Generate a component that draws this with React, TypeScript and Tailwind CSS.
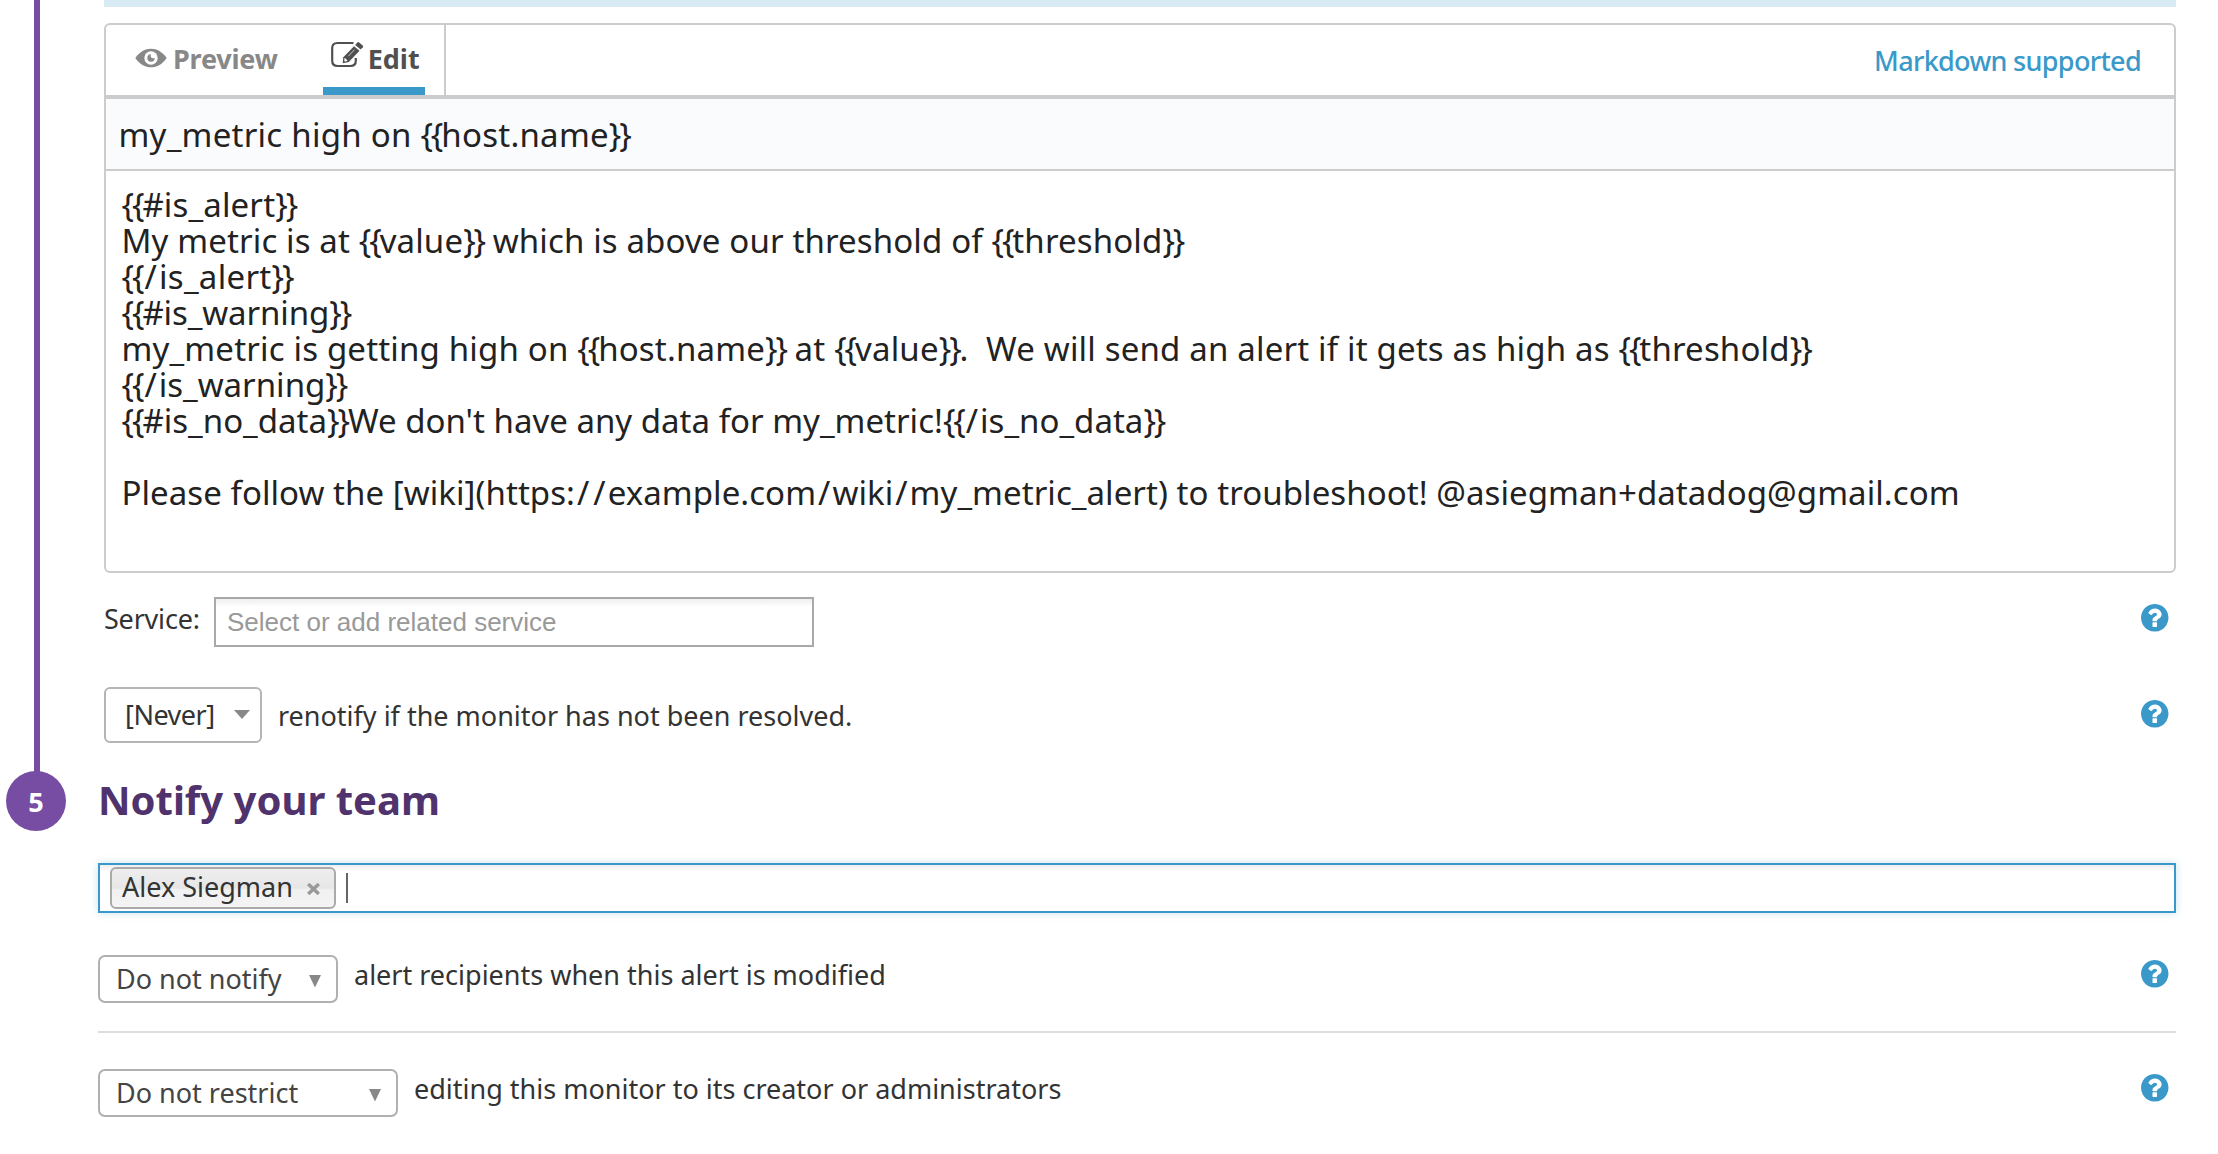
import type { ReactNode } from "react";

function EyeIcon() {
  return (
    <svg viewBox="0 0 32 20" className="h-5 w-8 shrink-0" aria-hidden="true">
      <path d="M0.3 10C4.6 3.8 10 0.7 16 0.7S27.400 3.800 31.700 10C27.400 16.200 22 19.300 16 19.300S4.600 16.200 0.300 10Z" fill="currentColor" />
      <circle cx="16" cy="10" r="6.700" fill="#fff" />
      <path d="M16 6.300A3.700 3.700 0 1 0 19.700 10Q17 10.700 16 9.300Q15.300 8 16 6.300Z" fill="currentColor" />
    </svg>
  );
}

function EditIcon() {
  return (
    <svg viewBox="0 0 33 27" className="h-[27px] w-[33px] shrink-0" fill="none" aria-hidden="true">
      <path d="M22.500 2H6.500Q1.200 2 1.200 7.200V19.800Q1.200 25 6.500 25H19.500Q24.800 25 24.800 19.800V17" stroke="currentColor" strokeWidth="2.200" />
      <path d="M23 5.200L28.500 9.700L17.800 21L11.700 22.200L12.300 16.200Z" fill="currentColor" />
      <path d="M24.200 4L26.300 1.500Q27.200 0.600 28.200 1.400L31.700 4.400Q32.600 5.200 31.800 6.200L29.600 8.500Z" fill="currentColor" />
      <path d="M13.900 17L16.500 19.400L15.700 20.200L13.900 20.500L13.300 19.900L13.500 17.600Z" fill="#fff" />
      <path d="M17.400 15.200L23.600 8.600" stroke="#fff" strokeWidth="0.700" />
    </svg>
  );
}

function HelpIcon({ className }: { className: string }) {
  return (
    <svg viewBox="128 128 1536 1536" className={`ml-auto mr-[7.500px] size-[27.500px] shrink-0 ${className}`} fill="#3a99c9" aria-hidden="true">
      <path d="M1024 1376v-192q0-14-9-23t-23-9h-192q-14 0-23 9t-9 23v192q0 14 9 23t23 9h192q14 0 23-9t9-23zm256-672q0-88-55.500-163t-138.500-116-170-41q-243 0-371 213-15 24 8 42l132 100q7 6 19 6 16 0 25-12 53-68 86-92 34-24 86-24 48 0 85.500 26t37.500 59q0 38-20 61t-68 45q-63 28-115.500 86.500t-52.500 125.500v36q0 14 9 23t23 9h192q14 0 23-9t9-23q0-19 21.500-49.500t54.500-49.500q32-18 49-28.500t46-35 44.500-48 28-60.500 12.500-81zm384 192q0 209-103 385.500t-279.500 279.500-385.500 103-385.500-103-279.500-279.500-103-385.500 103-385.500 279.500-279.500 385.500-103 385.500 103 279.500 279.500 103 385.500z" />
    </svg>
  );
}

function Triangle({ className }: { className: string }) {
  return (
    <svg viewBox="0 0 12 12" preserveAspectRatio="none" className={`shrink-0 ${className}`} aria-hidden="true">
      <path d="M0 0H12L6 12Z" fill="#888" />
    </svg>
  );
}

/* Template text: braces are set tight and slashes loose. */
function Template({ text }: { text: string }) {
  return (
    <>
      {text.split(/(\{\{|\}\}|\/)/).map((part, i) => {
        if (part === "{{" || part === "}}") return <span key={i} className="tracking-[-2.1px]">{part}</span>;
        if (part === "/") return <span key={i} className="px-[2px]">{part}</span>;
        return part;
      })}
    </>
  );
}

const LINES: [string, string][] = [
  ["{{#is_alert}}", "tracking-[0.15px]"],
  ["My metric is at {{value}} which is above our threshold of {{threshold}}", "tracking-[0.13px]"],
  ["{{/is_alert}}", "tracking-[0.3px]"],
  ["{{#is_warning}}", "tracking-[-0.1px]"],
  ["my_metric is getting high on {{host.name}} at {{value}}.  We will send an alert if it gets as high as {{threshold}}", "tracking-[0.17px]"],
  ["{{/is_warning}}", "tracking-[0px]"],
  ["{{#is_no_data}}We don't have any data for my_metric!{{/is_no_data}}", "tracking-[0.01px]"],
  ["", ""],
  ["Please follow the [wiki](https://example.com/wiki/my_metric_alert) to troubleshoot! @asiegman+datadog@gmail.com", "tracking-[0.06px]"],
];

function SelectBox({ children, className }: { children: ReactNode; className: string }) {
  return (
    <button className={`flex h-12 shrink-0 items-center justify-between rounded-[7px] border-2 border-[#b0b0b0] bg-white pr-[15px] pl-4 text-[#444] ${className}`}>
      {children}
      <Triangle className="mt-1 h-[12.500px] w-3" />
    </button>
  );
}

export default function App() {
  return (
    <div className="flex h-[1154px] w-[2218px] overflow-hidden bg-white font-['Noto_Sans',sans-serif] text-[27px] whitespace-pre text-[#333]">
      <aside className="flex w-[98px] shrink-0 flex-col pl-[6px]">
        <div className="ml-7 h-[772px] w-[6px] shrink-0 bg-[#774da3]" />
        <div className="-mt-px flex size-[60px] items-center justify-center rounded-full bg-[#774da3] text-[27px] leading-none font-bold text-white">
          5
        </div>
      </aside>

      <main className="flex w-[2078px] shrink-0 flex-col">
        <div className="ml-[6px] h-[7px] bg-[#d8ebf4]" />

        <section className="mt-4 ml-[6px] flex h-[550px] flex-col overflow-hidden rounded-[6px] border-2 border-[#ccc]">
          <header className="flex h-[74px] shrink-0 border-b-4 border-[#ccc]">
            <nav className="flex w-[340px] border-r-2 border-[#ccc] font-bold">
              <button className="flex items-center pb-[2px] pl-[29px] text-[#888]">
                <span className="-mt-[2px]"><EyeIcon /></span>
                <span className="ml-[6px] tracking-[-0.2px]">Preview</span>
              </button>
              <button className="ml-[45px] flex w-[102px] items-center border-b-8 border-[#3a99c9] pl-2 text-[#505050]">
                <span className="-mt-[3px]"><EditIcon /></span>
                <span className="mt-[7px] ml-[4px]">Edit</span>
              </button>
            </nav>
            <a className="ml-auto flex items-center pt-[2px] pr-[33px] font-medium tracking-[-0.68px] text-[#3a99c9]">Markdown supported</a>
          </header>
          <div className="flex h-[72px] shrink-0 items-center border-b-2 border-[#ccc] bg-[#fafbfd] pt-[2px] pl-[12.500px] text-[33px] tracking-[0.25px] text-[#222]">
            <span><Template text="my_metric high on {{host.name}}" /></span>
          </div>
          <div className="flex-1 pt-4 pl-[15.500px] text-[33px] leading-[36px] text-[#222]">
            {LINES.map(([text, tracking], i) => (
              <p key={i} className={`h-9 ${tracking}`}><Template text={text} /></p>
            ))}
          </div>
        </section>

        <div className="mt-6 ml-[6px] flex h-[50px] items-start">
          <span className="w-[110px] leading-[44px] tracking-[-0.2px]">Service:</span>
          <div className="flex h-[50px] w-[600px] items-center border-2 border-[#a9a9a9] bg-[linear-gradient(#eee,#fff_8px)] pl-[11px] font-['Liberation_Sans',Arial,sans-serif] text-[26px] text-[#999]">
            Select or add related service
          </div>
          <HelpIcon className="mt-[7px]" />
        </div>

        <div className="mt-10 ml-[6px] flex h-14 items-start">
          <button className="flex h-14 w-[158px] items-center justify-between rounded-[6px] border-2 border-[#b5b5b5] pr-[10px] pl-[19px] tracking-[-0.5px]">
            [Never]
            <Triangle className="-mt-[2px] h-[9px] w-4" />
          </button>
          <span className="ml-4 leading-[57px]">renotify if the monitor has not been resolved.</span>
          <HelpIcon className="mt-[13px]" />
        </div>

        <h2 className="mt-[31px] h-[50px] text-[40px] leading-[51px] font-bold text-[#50326c]">Notify your team</h2>

        <div className="mt-[39px] flex h-[50px] items-center border-2 border-[#3a99c9] bg-[linear-gradient(#eee,#fff_7px)] pl-[10px] shadow-[0_0_8px_#3a99c944]">
          <div className="flex h-[42px] w-[226px] items-center justify-between rounded-[6px] border-2 border-[#aaa] bg-[linear-gradient(#eee,#e6e6e6_50%,#f1f1f1_55%,#f4f4f4)] pr-[14px] pb-[2px] pl-[10px]">
            Alex Siegman
            <svg viewBox="0 0 13 12" className="mt-[4px] h-3 w-[13px]" aria-hidden="true">
              <path d="M1.200 1L11.800 11M11.800 1L1.200 11" stroke="#999" strokeWidth="3.400" />
            </svg>
          </div>
          <div className="ml-[10px] h-[30px] w-[2px] bg-[#666]" />
        </div>

        <div className="mt-[42px] flex h-12 items-start">
          <SelectBox className="w-[240px]">Do not notify</SelectBox>
          <span className="ml-4 leading-[40px]">alert recipients when this alert is modified</span>
          <HelpIcon className="mt-[5px]" />
        </div>

        <hr className="mt-7 border-t-2 border-[#ddd]" />

        <div className="mt-9 flex h-12 items-start">
          <SelectBox className="w-[300px]">Do not restrict</SelectBox>
          <span className="ml-4 leading-[40px]">editing this monitor to its creator or administrators</span>
          <HelpIcon className="mt-[5px]" />
        </div>
      </main>
    </div>
  );
}
